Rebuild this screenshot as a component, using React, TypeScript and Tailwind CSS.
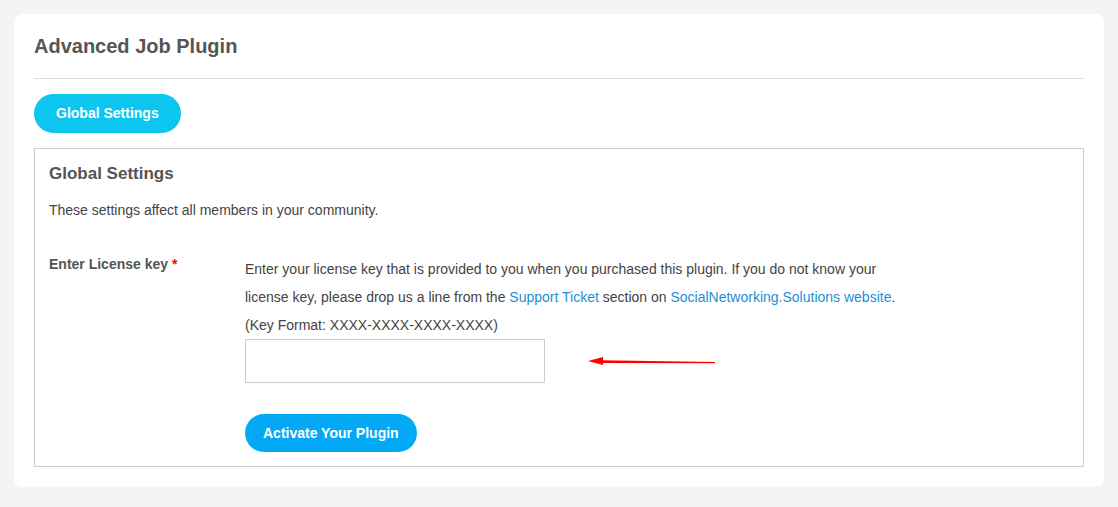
import { useState } from 'react';

export default function App() {
  const [licenseKey, setLicenseKey] = useState('');

  return (
    <div className="min-h-[507px] bg-[#f4f4f4] p-[14px] font-['Liberation_Sans',sans-serif] text-[#444]">
      <div className="rounded-lg bg-white px-5 pt-[16px] pb-5">
        <h1 className="text-[20px] font-bold leading-[32px] text-[#555]">Advanced Job Plugin</h1>
        <div className="mt-[16px] border-t border-[#ddd]" />

        <div className="mt-[15px]">
          <button className="h-[39px] rounded-full bg-[#0dc6ef] px-[22px] text-[14px] font-bold text-white">
            Global Settings
          </button>
        </div>

        {/* Settings panel */}
        <div className="mt-[15px] border border-[#ccc] px-[14px] pt-[14px] pb-[14px]">
          <h2 className="text-[17px] font-bold leading-[22px] text-[#555]">Global Settings</h2>
          <p className="mt-[15px] text-[14px] leading-[20px] text-[#444]">
            These settings affect all members in your community.
          </p>

          <div className="mt-[34px] flex">
            <label className="w-[196px] shrink-0 text-[14px] font-bold leading-[20px] text-[#555]">
              Enter License key <span className="text-[#f00]">*</span>
            </label>
            <div className="mt-[1px]">
              <p className="w-[660px] text-[14px] leading-[28px] text-[#444]">
                Enter your license key that is provided to you when you purchased this plugin. If you do not know your
                license key, please drop us a line from the{' '}
                <a href="#" className="text-[#1b8fd4]">Support Ticket</a> section on{' '}
                <a href="#" className="text-[#1b8fd4]">SocialNetworking.Solutions website</a>.
              </p>
              <p className="text-[14px] leading-[28px] text-[#444]">(Key Format: XXXX-XXXX-XXXX-XXXX)</p>
              <div className="flex items-center">
                <input
                  value={licenseKey}
                  onChange={(e) => setLicenseKey(e.target.value)}
                  className="h-[44px] w-[300px] border border-[#ccc] px-2 text-[14px] outline-none"
                />
                <svg width="130" height="12" viewBox="0 0 130 12" className="ml-[42px]">
                  <path d="M14 5.2 L128 7 L128 8.2 L14 8 Z" fill="#f00" />
                  <path d="M1 6 L16 2 L16 10 Z" fill="#f00" />
                </svg>
              </div>
              <button className="mt-[31px] h-[38px] rounded-full bg-[#03a9f4] px-[18px] text-[14px] font-bold text-white">
                Activate Your Plugin
              </button>
            </div>
          </div>
        </div>
      </div>
    </div>
  );
}
